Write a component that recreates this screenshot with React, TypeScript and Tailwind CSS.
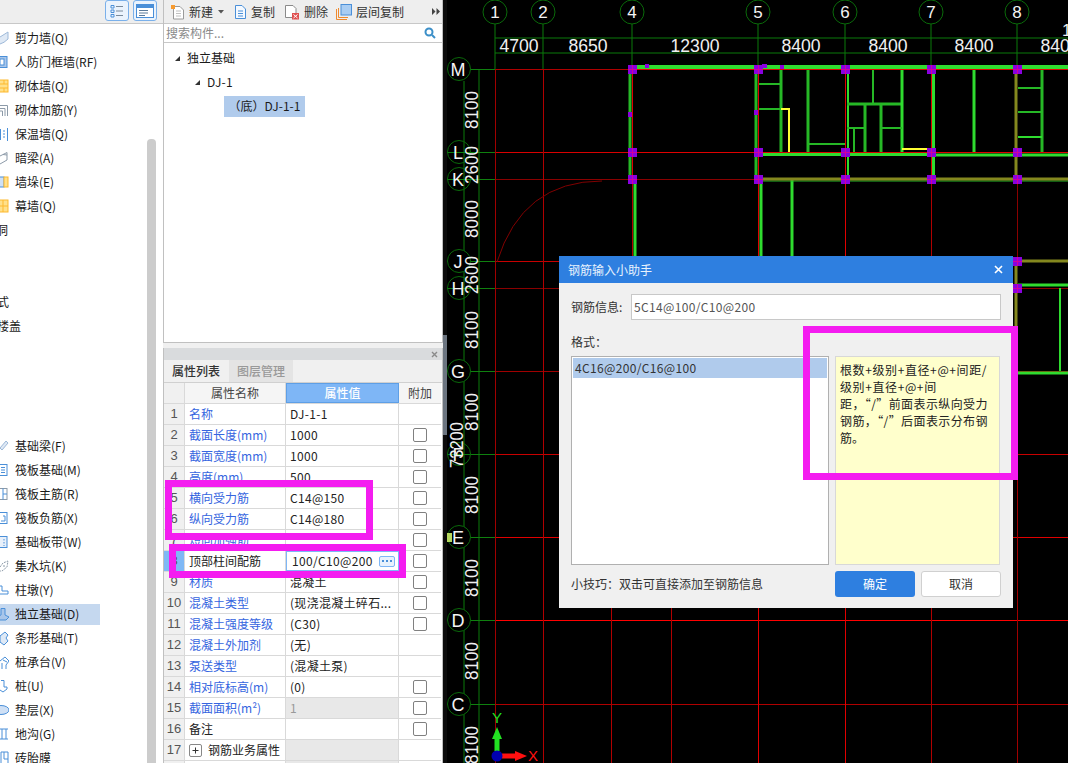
import React from 'react';

const FONT = 'font-["Noto_Sans_CJK_SC","Liberation_Sans",sans-serif]';

const BLUE = '#4a8fd8';
const YEL = '#fdb92e';
const GREY = '#8c9aa8';

// left list: each icon is clipped by the panel edge, so only its right part shows
const sideIcons: Record<string, React.ReactNode> = {
  wall: <path d="M0 7 L8 2 V9 Q4 13 0 14" fill="#dfe9f5" stroke="#9db8d8" />,
  door: <><rect x="-3" y="2.5" width="10" height="11" fill="#a9c6ea" stroke={BLUE} /><rect x="0" y="5" width="4" height="6" fill="#fff" stroke={BLUE} /></>,
  brick: <><rect x="-2" y="2" width="10" height="12" fill="#ffe08a" stroke={YEL} /><path d="M0 6 H8 M0 10 H8 M4 2 V6 M4 10 V14" stroke={YEL} /></>,
  rebar: <path d="M0 3.5 H7.5 V14 M0 6.5 H5 V14 M0 9 H2.5 V14" fill="none" stroke={GREY} />,
  warm: <path d="M0.5 3 V14 M7.5 2 V15 M3 5 H5 M3 8 H5 M3 11 H5" fill="none" stroke={BLUE} />,
  dark: <path d="M0 6 L7 2.5 V10 L0 14 M0 6 L-3 5 M3 4.5 L7 5" fill="#fff" stroke={GREY} />,
  pier: <><rect x="-2" y="3" width="6" height="10" fill="#cfe0f5" stroke={BLUE} /><rect x="4" y="3" width="4" height="10" fill="#ffe08a" stroke={YEL} /></>,
  curtain: <><rect x="-2" y="2" width="10" height="12" fill="#ffe08a" stroke={YEL} /><path d="M3 2 V14 M-2 8 H8" stroke={YEL} /></>,
  beam: <path d="M0 10 L6 3 L8 5 L2 12 Z" fill="#dfe9f5" stroke="#9db8d8" />,
  raft: <><rect x="-2" y="2.5" width="9" height="11" fill="#fff" stroke={BLUE} /><path d="M1 5.5 H5 M1 8 H5 M1 10.5 H5" stroke={BLUE} /></>,
  main: <><rect x="-2" y="2.5" width="9" height="11" fill="#fff" stroke={GREY} /><path d="M3 2.5 V13.5 M3 8 H7" stroke={BLUE} /></>,
  neg: <><rect x="-2" y="2.5" width="9" height="11" fill="#fff" stroke={BLUE} /><path d="M3 6 H5 V11 H1" fill="none" stroke={BLUE} /></>,
  band: <><rect x="-2" y="2.5" width="9" height="11" fill="#e8f0fa" stroke={BLUE} /><path d="M4 5 V6.5 M4 8 V9.5 M4 11 V12" stroke={BLUE} /></>,
  pit: <path d="M0 9 L3 5 L8 3 L7 9 L2 13 H0 M3 8 H5" fill="none" stroke={GREY} strokeDasharray="2 1" />,
  pedestal: <path d="M0 4 H2 V9 H8 V12 H0" fill="#fff" stroke={BLUE} />,
  isolated: <path d="M1 2.5 H5 V9 L9 11 L6 14 H-2 V10 L1 9 Z" fill="#a9c6ea" stroke={BLUE} />,
  strip: <path d="M0 6 L5 2 L8 5 L6 8 L8 11 L4 15 L0 12 Z" fill="#dfe9f5" stroke={BLUE} />,
  cap: <path d="M0 7 L5 3 L9 7 L6 11 V15 M2 9 V15 M3 6 L7 8" fill="none" stroke={BLUE} />,
  pile: <path d="M1 2.5 H4 V9 H7 V11 L3 14 L0 12" fill="none" stroke={BLUE} />,
  cushion: <ellipse cx="1" cy="8" rx="8" ry="4.5" fill="#cfe0f5" stroke={BLUE} />,
  trench: <path d="M0 3 H8 M0 13 H8 M2 3 V13 M6 3 V13" fill="none" stroke={BLUE} />,
  tire: <path d="M1 2 H8 V15 M1 2 V15 M4 2 V9 H8" fill="none" stroke={BLUE} />,
};

type SideItem = { label?: string; icon?: string; shift?: number; active?: boolean };

const sideItems: SideItem[] = [
  { label: '剪力墙(Q)', icon: 'wall' },
  { label: '人防门框墙(RF)', icon: 'door' },
  { label: '砌体墙(Q)', icon: 'brick' },
  { label: '砌体加筋(Y)', icon: 'rebar' },
  { label: '保温墙(Q)', icon: 'warm' },
  { label: '暗梁(A)', icon: 'dark' },
  { label: '墙垛(E)', icon: 'pier' },
  { label: '幕墙(Q)', icon: 'curtain' },
  { label: '洞', shift: -4 },
  {},
  {},
  { label: '式', shift: -3 },
  { label: '楼盖', shift: -3 },
  {},
  {},
  {},
  {},
  { label: '基础梁(F)', icon: 'beam' },
  { label: '筏板基础(M)', icon: 'raft' },
  { label: '筏板主筋(R)', icon: 'main' },
  { label: '筏板负筋(X)', icon: 'neg' },
  { label: '基础板带(W)', icon: 'band' },
  { label: '集水坑(K)', icon: 'pit' },
  { label: '柱墩(Y)', icon: 'pedestal' },
  { label: '独立基础(D)', icon: 'isolated', active: true },
  { label: '条形基础(T)', icon: 'strip' },
  { label: '桩承台(V)', icon: 'cap' },
  { label: '桩(U)', icon: 'pile' },
  { label: '垫层(X)', icon: 'cushion' },
  { label: '地沟(G)', icon: 'trench' },
  { label: '砖胎膜', icon: 'tire' },
];

type PropRow = { n: number | ''; name?: string; value?: string; check?: boolean; black?: boolean; grey?: boolean; editing?: boolean; group?: boolean };

const propRows: PropRow[] = [
  { n: 1, name: '名称', value: 'DJ-1-1' },
  { n: 2, name: '截面长度(mm)', value: '1000', check: true },
  { n: 3, name: '截面宽度(mm)', value: '1000', check: true },
  { n: 4, name: '高度(mm)', value: '500', check: true },
  { n: 5, name: '横向受力筋', value: 'C14@150', check: true },
  { n: 6, name: '纵向受力筋', value: 'C14@180', check: true },
  { n: 7, name: '短向加强筋', check: true },
  { n: 8, name: '顶部柱间配筋', value: '100/C10@200', check: true, black: true, editing: true },
  { n: 9, name: '材质', value: '混凝土', check: true },
  { n: 10, name: '混凝土类型', value: '(现浇混凝土碎石...', check: true },
  { n: 11, name: '混凝土强度等级', value: '(C30)', check: true },
  { n: 12, name: '混凝土外加剂', value: '(无)' },
  { n: 13, name: '泵送类型', value: '(混凝土泵)' },
  { n: 14, name: '相对底标高(m)', value: '(0)', check: true },
  { n: 15, name: '截面面积(m²)', value: '1', check: true, grey: true },
  { n: 16, name: '备注', check: true, black: true },
  { n: 17, name: '钢筋业务属性', black: true, grey: true, group: true },
  { n: '', grey: true },
];

const Toolbtn = ({ children }: { children: React.ReactNode }) => (
  <div className="flex h-[21px] w-[24px] items-center justify-center rounded-[3px] border border-[#7ab0ea] bg-[#eaf3fd]">
    {children}
  </div>
);

const Sidebar = () => (
  <aside className="flex h-full w-[163px] shrink-0 flex-col bg-white">
    <div className="flex h-[24px] shrink-0 items-start justify-end gap-[4px] border-b border-[#c8c8c8] bg-[#eeeeee] pr-[6px]">
      <Toolbtn>
        <svg width="14" height="14" viewBox="0 0 14 14" fill="none" stroke={BLUE}>
          <path d="M1 1.5 H4 V4 H1 Z M1 6 H4 V8.5 H1 Z M1 10.5 H4 V13 H1 Z" />
          <path d="M6 2.5 H13 M6 7 H13 M6 11.5 H13" stroke="#7a8a9a" />
        </svg>
      </Toolbtn>
      <Toolbtn>
        <svg width="18" height="14" viewBox="0 0 18 14">
          <rect x="0.5" y="0.5" width="17" height="13" fill="#fff" stroke={BLUE} />
          <rect x="0.5" y="0.5" width="17" height="3.5" fill={BLUE} />
          <path d="M3 6.5 H12 M3 9 H12 M3 11.5 H9" stroke="#5a7a9a" />
        </svg>
      </Toolbtn>
    </div>
    <div className="flex min-h-0 flex-1">
      <div className="w-[147px] overflow-hidden pt-[2px]">
        {sideItems.map((item, i) => (
          <div key={i} className="flex h-[24px] items-center">
            <div className={`flex h-[21px] w-[100px] items-center ${item.active ? 'bg-[#c5d8ef]' : ''}`}>
              {item.icon ? (
                <svg width="9" height="16" viewBox="0 0 9 16" className="mr-[6px] shrink-0 overflow-hidden">
                  {sideIcons[item.icon]}
                </svg>
              ) : null}
              {item.label ? (
                <span
                  className="whitespace-nowrap text-[12px] leading-[16px] text-[#1a1a1a]"
                  style={item.shift ? { marginLeft: item.shift } : undefined}
                >
                  {item.label}
                </span>
              ) : null}
            </div>
          </div>
        ))}
      </div>
      <div className="flex w-[16px] flex-col pt-[115px]">
        <div className="w-[9px] flex-1 rounded-t-[4px] bg-[#cccccc]" />
      </div>
    </div>
  </aside>
);

const Caret = () => (
  <svg width="7" height="7" viewBox="0 0 7 7" className="shrink-0">
    <path d="M6 1 V6 H1 Z" fill="#333" />
  </svg>
);

const ComponentTree = () => (
  <div className="flex h-[343px] shrink-0 flex-col border-x border-b border-[#c0c0c0] bg-white">
    <div className="flex h-[24px] shrink-0 items-center border-b border-[#c8c8c8] bg-[#eeeeee] text-[12px] leading-[16px] text-[#333]">
      <svg width="16" height="16" viewBox="0 0 16 16" className="ml-[6px]">
        <path d="M3.5 2.5 H10 L13.5 6 V15 H3.5 Z" fill="#fff" stroke="#9a9a9a" />
        <path d="M6 7 H11 M6 9.5 H11 M6 12 H11" stroke="#c0c0c0" />
        <path d="M1 1 H5 V5 H1 Z" fill="#f79a2e" />
      </svg>
      <span className="ml-[3px]">新建</span>
      <svg width="6" height="4" viewBox="0 0 6 4" className="ml-[5px]"><path d="M0 0 H6 L3 3.5 Z" fill="#555" /></svg>
      <svg width="15" height="16" viewBox="0 0 15 16" className="ml-[9px]" fill="none" stroke={BLUE}>
        <path d="M2.5 1.5 H9 L12.5 5 V14.5 H2.5 Z" fill="#f4f9ff" />
        <path d="M5 7 H10 M5 9.5 H10 M5 12 H10" />
      </svg>
      <span className="ml-[3px]">复制</span>
      <svg width="16" height="16" viewBox="0 0 16 16" className="ml-[9px]">
        <path d="M1.5 1.5 H9 L12 4.5 V13.5 H1.5 Z" fill="#fff" stroke="#8a8a8a" />
        <rect x="8" y="9" width="7" height="6.5" fill="#e05050" />
        <path d="M9.5 10.5 L13.5 14 M13.5 10.5 L9.5 14" stroke="#fff" />
      </svg>
      <span className="ml-[4px]">删除</span>
      <svg width="16" height="16" viewBox="0 0 16 16" className="ml-[8px]">
        <path d="M0.5 5 V15.5 H11" fill="none" stroke="#ef8a2e" />
        <path d="M2.5 4 V13.5 H12" fill="none" stroke="#ef8a2e" />
        <rect x="5" y="0.5" width="10.5" height="10.5" fill="#a9cdf3" stroke={BLUE} />
      </svg>
      <span className="ml-[4px]">层间复制</span>
      <svg width="8" height="7" viewBox="0 0 8 7" className="ml-[28px]"><path d="M0 0 L3.5 3.5 L0 7 Z M4.5 0 L8 3.5 L4.5 7 Z" fill="#444" /></svg>
    </div>
    <div className="flex h-[19px] shrink-0 items-center border-b border-[#c8c8c8] pl-[2px] pr-[6px] text-[12px] leading-[16px] text-[#8a8a8a]">
      <span className="flex-1">搜索构件...</span>
      <svg width="12" height="12" viewBox="0 0 12 12" fill="none" stroke="#3c8fc8" strokeWidth="2">
        <circle cx="5" cy="5" r="3.5" />
        <path d="M8 8 L11 11" />
      </svg>
    </div>
    <div className="pt-[3px] text-[12px] leading-[16px] text-[#1a1a1a]">
      <div className="flex h-[24px] items-center pl-[10px]">
        <Caret />
        <span className="ml-[6px]">独立基础</span>
      </div>
      <div className="flex h-[24px] items-center pl-[30px]">
        <Caret />
        <span className="ml-[6px] tracking-[0.2px]">DJ-1</span>
      </div>
      <div className="flex h-[24px] items-center pl-[60px]">
        <div className="flex h-[21px] w-[81px] items-center justify-center whitespace-nowrap bg-[#b0cbec]">（底）DJ-1-1</div>
      </div>
    </div>
  </div>
);

const PropertyPanel = () => (
  <div className="flex min-h-0 flex-1 flex-col overflow-hidden border-x border-[#c0c0c0] bg-white text-[12px] leading-[16px]">
    <div className="flex h-[12px] shrink-0 items-center justify-end bg-[#d9dbdd] pr-[4px]">
      <svg width="7" height="7" viewBox="0 0 7 7" stroke="#8a8a8a" strokeWidth="1.4"><path d="M1 1 L6 6 M6 1 L1 6" /></svg>
    </div>
    <div className="flex h-[23px] shrink-0 items-end border-b border-[#d0d0d0] bg-[#f0f0f0]">
      <div className="flex h-[22px] w-[64px] items-center justify-center font-medium text-[#333]">属性列表</div>
      <div className="ml-[1px] flex h-[22px] w-[64px] items-center justify-center bg-[#e4e4e4] font-medium text-[#999]">图层管理</div>
    </div>
    <div className="w-[277px]">
      <div className="grid h-[21px] grid-cols-[21px_101px_113px_42px] border-b border-[#d9d9d9] text-[#444]">
        <div className="border-r border-[#d9d9d9] bg-[#f0f0f0]" />
        <div className="flex items-center justify-center border-r border-[#d9d9d9] bg-[#f5f5f5]">属性名称</div>
        <div className="flex items-center justify-center border border-[#5e9fe6] bg-[#7eb6f6] font-medium text-white">属性值</div>
        <div className="flex items-center justify-center bg-[#f5f5f5]">附加</div>
      </div>
      {propRows.map((row, i) => (
        <div key={i} className="grid h-[21px] grid-cols-[21px_101px_113px_42px] border-b border-[#d9d9d9]">
          <div className={`flex items-center justify-center border-r border-[#d9d9d9] font-["Liberation_Sans",sans-serif] text-[13px] text-[#555] ${row.editing ? 'bg-[#7fb8f5]' : 'bg-[#f0f0f0]'}`}>
            {row.n}
          </div>
          <div className={`flex items-center overflow-hidden whitespace-nowrap border-r border-[#d9d9d9] pl-[4px] ${row.black ? 'text-[#222]' : 'text-[#3565e0]'}`}>
            {row.group ? (
              <svg width="13" height="13" viewBox="0 0 13 13" className="mr-[6px] shrink-0" fill="none">
                <rect x="0.5" y="0.5" width="12" height="12" rx="1.5" stroke="#888" />
                <path d="M3.5 6.5 H9.5 M6.5 3.5 V9.5" stroke="#333" />
              </svg>
            ) : null}
            {row.name}
          </div>
          {row.editing ? (
            <div className="flex items-center justify-between border border-[#7eb6f6] pl-[5px] pr-[3px] tracking-[0.35px] text-[#222]">
              <span>{row.value}</span>
              <div className="flex h-[11px] w-[16px] shrink-0 items-center justify-center rounded-[2px] border border-[#7eb6f6] bg-[#e8f2fd]">
                <svg width="10" height="2" viewBox="0 0 10 2" fill="#4a8fd8">
                  <rect x="0" y="0" width="2" height="2" />
                  <rect x="4" y="0" width="2" height="2" />
                  <rect x="8" y="0" width="2" height="2" />
                </svg>
              </div>
            </div>
          ) : (
            <div className={`flex items-center overflow-hidden whitespace-nowrap border-r border-[#d9d9d9] pl-[4px] tracking-[0.3px] ${row.grey ? 'bg-[#e8e8e8] text-[#999]' : 'text-[#222]'}`}>
              {row.value}
            </div>
          )}
          <div className="flex items-center justify-center">
            {row.check ? <div className="h-[14px] w-[14px] rounded-[2px] border border-[#808080] bg-white" /> : null}
          </div>
        </div>
      ))}
    </div>
  </div>
);

// canvas data, page coordinates
const AXIS_X: [string, number][] = [['1', 495], ['2', 543], ['4', 632], ['5', 758], ['6', 845], ['7', 931], ['8', 1017]];
const AXIS_Y: [string, number, string][] = [
  ['M', 69, '#b00000'], ['L', 152, '#d80000'], ['K', 179, '#8a0000'], ['J', 261, '#c80000'], ['H', 288, '#8a0000'],
  ['G', 371, '#a00000'], ['F', 454, '#c80000'], ['E', 537, '#e00000'], ['D', 620, '#ff0000'], ['C', 704, '#b00000'],
];
const DIM_TOP: [string, number][] = [['4700', 519], ['8650', 588], ['12300', 695], ['8400', 801], ['8400', 888], ['8400', 974], ['8400', 1060]];
const DIM_LEFT: [string, number][] = [['8100', 110], ['2600', 165], ['8000', 219], ['2600', 275], ['8100', 330], ['8100', 412], ['8100', 495], ['8100', 578], ['8100', 661], ['8100', 745]];

const G = '#2fdc2f';
const G2 = '#26b826';
const OL = '#84881e';
const Y = '#ffff33';

// x1 y1 x2 y2 colour width
const walls: [number, number, number, number, string, number][] = [
  [632, 67, 1068, 67, G, 4],
  [630, 66, 630, 179, G2, 3],
  [635, 179, 635, 256, G, 3],
  [756, 66, 756, 179, G2, 3],
  [761, 179, 761, 256, G, 3],
  [792, 179, 792, 256, G, 3],
  [781, 69, 781, 152, G2, 3],
  [758, 84, 781, 84, G2, 2],
  [758, 109, 781, 109, G2, 2],
  [808, 69, 808, 152, G2, 3],
  [808, 144, 845, 144, G2, 2],
  [848, 69, 848, 179, G, 2],
  [847, 104, 902, 104, G2, 3],
  [873, 69, 873, 104, G2, 2],
  [902, 69, 902, 152, G, 3],
  [865, 104, 865, 152, G2, 3],
  [881, 104, 881, 152, G2, 3],
  [847, 128, 865, 128, G2, 2],
  [854, 128, 854, 152, G2, 2],
  [881, 128, 902, 128, G2, 2],
  [933, 69, 933, 179, G, 4],
  [974, 69, 974, 152, G, 3],
  [1016, 69, 1016, 179, OL, 3],
  [1017.5, 179, 1017.5, 261, '#8a0000', 1],
  [1016, 261, 1016, 371, OL, 3],
  [1042, 69, 1042, 152, G2, 3],
  [1018, 88, 1042, 88, G2, 2],
  [1018, 112, 1042, 112, G2, 2],
  [1018, 137, 1042, 137, G, 2],
  [758, 154, 931, 154, G, 4],
  [931, 155, 1068, 155, G, 3],
  [758, 181, 1068, 181, G2, 1],
  [758, 179, 1068, 179, OL, 3],
  [1018, 261, 1068, 261, OL, 3],
  [1018, 285, 1068, 285, G, 3],
  [1060, 288, 1060, 371, G, 2],
  [1018, 373, 1068, 373, G, 3],
];
const yellow: string[] = ['M781 109 H789 V152', 'M902 149 H927'];

const columns: [number, number][] = [632, 758, 845, 931, 1017].flatMap((x) => [69, 152, 179].map((y) => [x, y] as [number, number])).concat([[1017, 261], [1017, 288]]);
const studs: [number, number, number, number][] = [[645, 64, 4, 4], [762, 64, 5, 4], [780, 65, 4, 4], [628, 112, 4, 5], [754, 110, 4, 5], [1013, 367, 5, 8]];

const Canvas = () => (
  <svg width="621" height="763" viewBox="447 0 621 763" className="block shrink-0 bg-black" fontFamily="'Liberation Sans', sans-serif">
    {/* axis lines */}
    <path d="M495 24 V69 M543 24 V69 M632 24 V69 M758 24 V69 M845 24 V69 M931 24 V69 M1017 24 V69" stroke="#0a7a0a" />
    <path d="M495 38 H1068 M495 53 H1068" stroke="#0a7a0a" />
    <path d="M464 81 V763 M479 69 V763" stroke="#0a7a0a" />
    {AXIS_Y.map(([, y]) => <path key={y} d={`M447 ${y + 0.5} H495`} stroke="#0f800f" />)}
    {AXIS_Y.map(([, y, c]) => <path key={y} d={`M495 ${y + 0.5} H1068`} stroke={c} />)}
    <path d="M495.5 69 V763" stroke="#a00000" />
    <path d="M543.5 69 V763" stroke="#b00000" />
    <path d="M632.5 69 V280" stroke="#b00000" />
    <path d="M611.5 300 V763 M671.5 300 V763" stroke="#b00000" />
    <path d="M758.5 69 V763 M845.5 69 V763" stroke="#e00000" />
    <path d="M931.5 69 V763" stroke="#b00000" />
    <path d="M1017.5 372 V763" stroke="#a00000" />
    <path d="M497 262 Q 522 181 602 181" fill="none" stroke="#800000" />

    {/* walls */}
    {walls.map(([x1, y1, x2, y2, c, w], i) => (
      <line key={i} x1={x1} y1={y1} x2={x2} y2={y2} stroke={c} strokeWidth={w} />
    ))}
    {yellow.map((d) => <path key={d} d={d} fill="none" stroke={Y} strokeWidth="2" />)}
    <path d="M632 69.5 H1068 M632 152.5 H1068" stroke="#e00000" />
    <path d="M758.5 69 V180 M845.5 69 V180 M632.5 69 V180 M931.5 69 V180" stroke="#e00000" />
    {columns.map(([x, y]) => (
      <g key={`${x}-${y}`}>
        <rect x={x - 4} y={y - 4} width="9" height="9" fill="#8a00e0" />
        <path d={`M${x - 4} ${y + 0.5} H${x + 5} M${x + 0.5} ${y - 4} V${y + 5}`} stroke="#d000a0" />
      </g>
    ))}
    {studs.map(([x, y, w, h]) => <rect key={`${x}-${y}`} x={x} y={y} width={w} height={h} fill="#8a00e0" />)}

    {/* bubbles */}
    {AXIS_X.map(([t, x]) => (
      <g key={t}>
        <circle cx={x} cy={12} r={12} fill="#000" stroke="#0a6a0a" />
        <text x={x} y={18} textAnchor="middle" fontSize="17" fill="#f4f4f4">{t}</text>
      </g>
    ))}
    {AXIS_Y.map(([t, y]) => (
      <g key={t}>
        <circle cx={459} cy={y} r={11.5} fill={t === 'L' || t === 'K' || t === 'H' || t === 'F' ? 'none' : '#000'} stroke="#0a6a0a" />
        <text x={458} y={y + 7} textAnchor="middle" fontSize="18" fill="#f4f4f4">{t}</text>
      </g>
    ))}
    <rect x="447" y="533" width="5" height="9" fill="#b5d85f" />

    {/* dimensions */}
    {DIM_TOP.map(([t, x], i) => (
      <text key={i} x={x} y={52} textAnchor="middle" fontSize="18" textLength={t.length * 9.8} lengthAdjust="spacingAndGlyphs" fill="#f0f0f0">{t}</text>
    ))}
    <text x={1062} y={36} fontSize="17" fill="#f0f0f0">1</text>
    {DIM_LEFT.map(([t, y], i) => (
      <text key={i} transform={`rotate(-90 478 ${y})`} x={478} y={y} textAnchor="middle" fontSize="18" textLength={38} lengthAdjust="spacingAndGlyphs" fill="#f0f0f0">{t}</text>
    ))}
    <text transform="rotate(-90 463 445)" x={463} y={445} textAnchor="middle" fontSize="18" textLength={46} lengthAdjust="spacingAndGlyphs" fill="#f0f0f0">73200</text>

    {/* ucs */}
    <path d="M497 751 V736" stroke="#22e022" strokeWidth="5" />
    <path d="M497 727 L502 739 H492 Z" fill="#22e022" />
    <path d="M502 756 H520" stroke="#ff1010" strokeWidth="5" />
    <path d="M527 756 L515 751 V761 Z" fill="#ff1010" />
    <circle cx="497" cy="756" r="5.5" fill="#0000b0" />
    <text x={497} y={723} textAnchor="middle" fontSize="15" fill="#22e022">Y</text>
    <text x={533} y={761} textAnchor="middle" fontSize="15" fill="#ff1010">X</text>
  </svg>
);

const RebarDialog = () => (
  <div className="absolute left-[559px] top-[256px] flex h-[352px] w-[454px] flex-col bg-[#f0f0f0] text-[12px] leading-[16px] text-[#333]">
    <div className="flex h-[27px] shrink-0 items-center justify-between bg-[#2e7fe0] pl-[9px] pr-[10px] text-[#e8f2fd]">
      <span>钢筋输入小助手</span>
      <svg width="9" height="9" viewBox="0 0 9 9" stroke="#fff" strokeWidth="1.6"><path d="M1 1 L8 8 M8 1 L1 8" /></svg>
    </div>
    <div className="flex flex-1 flex-col px-[12px]">
      <div className="mt-[11px] flex h-[26px] items-center">
        <span className="w-[60px] shrink-0">钢筋信息:</span>
        <div className="flex h-[26px] flex-1 items-center border border-[#c8c8c8] bg-white pl-[2px] tracking-[0.35px] text-[#555]">5C14@100/C10@200</div>
      </div>
      <div className="mt-[12px] flex h-[20px] items-center">格式：</div>
      <div className="mt-[4px] flex h-[209px] gap-[6px]">
        <div className="w-[258px] border border-[#b0b0b0] bg-white p-[1px]">
          <div className="flex h-[20px] items-center bg-[#b0cbec] pl-[2px] tracking-[0.35px]">4C16@200/C16@100</div>
        </div>
        <div className="w-[165px] whitespace-nowrap border border-[#d8d8d8] bg-[#ffffcc] pl-[4px] pt-[4px] leading-[17px] text-[#222]">
          <span className="tracking-[0.6px]">根数+级别+直径+@+间距/</span><br />
          <span className="tracking-[0.6px]">级别+直径+@+间</span><br />
          <span className="tracking-[0.4px]">距，“/”前面表示纵向受力</span><br />
          <span className="tracking-[0.4px]">钢筋，“/”后面表示分布钢</span><br />
          筋。
        </div>
      </div>
      <div className="mt-[6px] flex h-[26px] items-center gap-[6px]">
        <span className="flex-1">小技巧：双击可直接添加至钢筋信息</span>
        <div className="flex h-[26px] w-[80px] items-center justify-center rounded-[3px] bg-[#2e7fe0] text-white">确定</div>
        <div className="flex h-[26px] w-[80px] items-center justify-center rounded-[3px] border border-[#d0d0d0] bg-white text-[#333]">取消</div>
      </div>
    </div>
  </div>
);

export default function App() {
  return (
    <div className={`relative flex h-[763px] w-[1068px] overflow-hidden bg-black ${FONT}`}>
      <Sidebar />
      <div className="flex h-full w-[280px] shrink-0 flex-col gap-[5px] bg-[#f0f0f0]">
        <ComponentTree />
        <PropertyPanel />
      </div>
      <div className="flex h-full w-[4px] shrink-0 flex-col bg-[#0c0c0c] pt-[335px]">
        <div className="h-[100px] bg-[#6c7580]" />
      </div>
      <Canvas />
      <RebarDialog />

      {/* hand-drawn annotation boxes on the screenshot */}
      <div className="absolute left-[165px] top-[480px] h-[60px] w-[208px] border-[7px] border-[#f41cf0]" />
      <div className="absolute left-[169px] top-[544px] h-[34px] w-[237px] border-[7px] border-[#f41cf0]" />
      <div className="absolute left-[803px] top-[326px] h-[154px] w-[215px] border-[7px] border-[#f41cf0]" />
    </div>
  );
}
